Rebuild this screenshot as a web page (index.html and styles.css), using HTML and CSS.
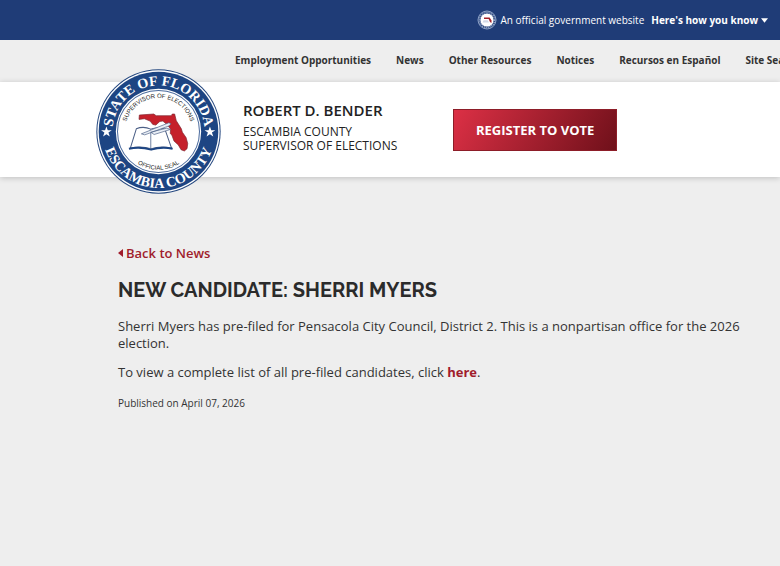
FILE: index.html
```html
<!DOCTYPE html>
<html lang="en">
<head>
    <meta charset="UTF-8">
    <meta name="viewport" content="width=device-width, initial-scale=1.0">
    <title>New Candidate: Sherri Myers</title>
    <link rel="stylesheet" href="styles.css">
</head>
<body>
    <div class="gov-banner">
        <svg class="gov-icon" viewBox="0 0 20 20" aria-hidden="true">
            <circle cx="10" cy="10" r="9" fill="#1f3b73" stroke="#8ea2c6" stroke-width="1"/>
            <circle cx="10" cy="10" r="7.6" fill="none" stroke="#8ea2c6" stroke-width="1.6" stroke-dasharray="1.2 .8"/>
            <circle cx="10" cy="10" r="6.6" fill="#fff"/>
            <path d="M7 7.4h5.6l2 3.2-.2 2.4-1.4-1-1.4-3H7z" fill="#a3242c"/>
            <path d="M5.6 12.6l1-2.4h4l1.4 2.4z" fill="#d3d9e6"/>
        </svg>
        <span class="gov-text">An official government website</span>
        <button class="gov-toggle" type="button">Here's how you know
            <svg class="caret-down" viewBox="0 0 8 5" aria-hidden="true"><path d="M0 0h8L4 5z" fill="currentColor"/></svg>
        </button>
    </div>

    <nav class="top-nav">
        <a href="#">Employment Opportunities</a>
        <a href="#">News</a>
        <a href="#">Other Resources</a>
        <a href="#">Notices</a>
        <a href="#">Recursos en Español</a>
        <a href="#">Site Search</a>
    </nav>

    <header class="site-header">
        <a class="seal-link" href="#" aria-label="Home">
            <svg class="seal" viewBox="20 23 372 372">
                <defs>
                    <path id="arc-state" d="M69 209a137 137 0 0 1 274 0"/>
                    <path id="arc-county" d="M38 209a168 168 0 0 0 336 0"/>
                    <path id="arc-office" d="M106 209a100 100 0 0 1 200 0"/>
                    <path id="arc-official" d="M92 209a114 114 0 0 0 228 0"/>
                </defs>
                <circle cx="206" cy="209" r="185" fill="#24477f"/>
                <circle cx="206" cy="209" r="182" fill="#fff"/>
                <circle cx="206" cy="209" r="178" fill="#1d4583"/>
                <circle cx="206" cy="209" r="127" fill="#fff"/>
                <circle cx="206" cy="209" r="122" fill="none" stroke="#4a6a9d" stroke-width="3"/>
                <text class="seal-ring"><textPath href="#arc-state" startOffset="50%">STATE OF FLORIDA</textPath></text>
                <text class="seal-ring"><textPath href="#arc-county" startOffset="50%">ESCAMBIA COUNTY</textPath></text>
                <text class="seal-inner"><textPath href="#arc-office" startOffset="50%">SUPERVISOR OF ELECTIONS</textPath></text>
                <text class="seal-inner"><textPath href="#arc-official" startOffset="50%">OFFICIAL SEAL</textPath></text>
                <!-- stars -->
                <path d="M51 194l4 11h12l-10 7 4 12-10-7-10 7 4-12-10-7h12z" fill="#fff"/>
                <path d="M359 194l4 11h12l-10 7 4 12-10-7-10 7 4-12-10-7h12z" fill="#fff"/>
                <!-- florida -->
                <path d="M149 160l43-3 7 5 45 0 3-5 7 0 5 20 15 24 3 10 11 16 5 18-2 15-8 7-10-4-8-14-13-12-6-17-5-5 1-13-9-12-14-12-9 1-12 11-9-2-8-10-17-7-16 2z" fill="#c5202b" stroke="#7d2630" stroke-width="2"/>
                <!-- book and pen -->
                <path d="M140 201q21-9 43 1 21-9 42 0l20 57q-31-8-61 1-32-9-62-1z" fill="#fff" stroke="#4b5f86" stroke-width="3"/>
                <path d="M118 260q35-6 66 3 30-9 64-3" fill="none" stroke="#1d4583" stroke-width="6"/>
                <path d="M183 202v57" fill="none" stroke="#7283a3" stroke-width="3"/>
                <path d="M155 216l82-33 6 3-5 6-73 27zM183 211l48-12 10 4-48 15z" fill="#e9eef5" stroke="#4b5f86" stroke-width="2"/>
            </svg>
        </a>
        <div class="office">
            <div class="office-name">ROBERT D. BENDER</div>
            <div class="office-title">ESCAMBIA COUNTY<br>SUPERVISOR OF ELECTIONS</div>
        </div>
        <a class="register-btn" href="#">REGISTER TO VOTE</a>
    </header>

    <main class="content">
        <a class="back-link" href="#"><svg class="caret-left" viewBox="0 0 5 8" aria-hidden="true"><path d="M5 0v8L0 4z" fill="currentColor"/></svg>Back to News</a>
        <h1>NEW CANDIDATE: SHERRI MYERS</h1>
        <p>Sherri Myers has pre-filed for Pensacola City Council, District 2. This is a nonpartisan office for the 2026 election.</p>
        <p>To view a complete list of all pre-filed candidates, click <a href="#">here</a>.</p>
        <p class="published">Published on April 07, 2026</p>
    </main>
</body>
</html>
```
FILE: styles.css
```css
* {
    box-sizing: border-box;
}
body {
    margin: 0;
    background-color: #eee;
    color: #333;
    font-family: "Open Sans", "Noto Sans", sans-serif;
    font-size: 13px;
    overflow-x: hidden;
}
a {
    color: #a01c2c;
    font-weight: bold;
    text-decoration: none;
}
/* Government banner */
.gov-banner {
    display: flex;
    align-items: center;
    justify-content: flex-end;
    height: 40px;
    padding-right: 12px;
    background: #1f3c77;
    color: #fff;
    font-size: 10px;
    font-weight: 500;
}
.gov-icon {
    width: 20px;
    height: 20px;
    margin-right: 4px;
}
.gov-toggle {
    display: flex;
    align-items: center;
    gap: 3px;
    margin-left: 7px;
    padding: 0;
    border: none;
    background: none;
    color: #fff;
    font-family: inherit;
    font-size: 10px;
    font-weight: bold;
    cursor: pointer;
}
.caret-down {
    width: 7px;
    height: 5px;
}
/* Navigation */
.top-nav {
    display: flex;
    gap: 25px;
    height: 42px;
    padding-left: 235px;
    line-height: 40px;
    white-space: nowrap;
    overflow: hidden;
}
.top-nav a {
    flex-shrink: 0;
    color: #333;
    font-size: 10px;
}
/* Header */
.site-header {
    display: flex;
    align-items: center;
    height: 95px;
    padding-left: 96px;
    background: #fff;
    box-shadow: 0 1px 6px rgba(0, 0, 0, 0.2);
}
.seal-link {
    flex-shrink: 0;
    width: 125px;
    height: 125px;
    margin: -12px 22px -16px 0;
}
.seal {
    display: block;
    width: 100%;
    height: 100%;
}
.seal-ring {
    fill: #fff;
    font-family: "Liberation Serif", serif;
    font-size: 42px;
    font-weight: bold;
    text-anchor: middle;
}
.seal-inner {
    fill: #222;
    font-family: "Liberation Sans", sans-serif;
    font-size: 18px;
    font-weight: normal;
    text-anchor: middle;
}
.office {
    width: 210px;
    padding-bottom: 6px;
    color: #222;
}
.office-name {
    font-size: 15px;
    font-weight: 600;
    line-height: 20px;
    margin-bottom: 5px;
}
.office-title {
    font-size: 12px;
    line-height: 14px;
}
.register-btn {
    padding: 12px 22px;
    border: 1px solid #8d1d28;
    background: linear-gradient(120deg, #dc3045, #6f101a);
    color: #fff;
    font-size: 13px;
    line-height: 16px;
}
/* Article */
.content {
    padding: 67px 32px 40px 118px;
}
.back-link {
    display: flex;
    align-items: center;
    gap: 3px;
    line-height: 18px;
    font-weight: 600;
}
.caret-left {
    width: 5px;
    height: 8px;
}
h1 {
    margin: 15px 0;
    color: #2b2b2b;
    font-family: Raleway, Lato, sans-serif;
    font-size: 20px;
    font-weight: bold;
    line-height: 26px;
}
p {
    margin: 0 0 12px;
    line-height: 17px;
}
.published {
    font-size: 10px;
    line-height: 20px;
}
```
